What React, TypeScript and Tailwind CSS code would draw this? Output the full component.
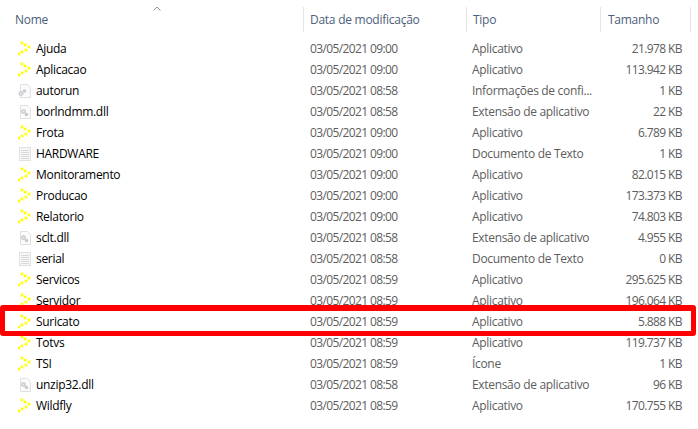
const rows: [string, string, string, string, string][] = [
  ['exe', 'Ajuda', '03/05/2021 09:00', 'Aplicativo', '21.978 KB'],
  ['exe', 'Aplicacao', '03/05/2021 09:00', 'Aplicativo', '113.942 KB'],
  ['ini', 'autorun', '03/05/2021 08:58', 'Informações de confi...', '1 KB'],
  ['dll', 'borlndmm.dll', '03/05/2021 08:58', 'Extensão de aplicativo', '22 KB'],
  ['exe', 'Frota', '03/05/2021 09:00', 'Aplicativo', '6.789 KB'],
  ['txt', 'HARDWARE', '03/05/2021 09:00', 'Documento de Texto', '1 KB'],
  ['exe', 'Monitoramento', '03/05/2021 09:00', 'Aplicativo', '82.015 KB'],
  ['exe', 'Producao', '03/05/2021 09:00', 'Aplicativo', '173.373 KB'],
  ['exe', 'Relatorio', '03/05/2021 09:00', 'Aplicativo', '74.803 KB'],
  ['dll', 'sclt.dll', '03/05/2021 08:58', 'Extensão de aplicativo', '4.955 KB'],
  ['txt', 'serial', '03/05/2021 08:58', 'Documento de Texto', '0 KB'],
  ['exe', 'Servicos', '03/05/2021 08:59', 'Aplicativo', '295.625 KB'],
  ['exe', 'Servidor', '03/05/2021 08:59', 'Aplicativo', '196.064 KB'],
  ['exe', 'Suricato', '03/05/2021 08:59', 'Aplicativo', '5.888 KB'],
  ['exe', 'Totvs', '03/05/2021 08:59', 'Aplicativo', '119.737 KB'],
  ['exe', 'TSI', '03/05/2021 08:59', 'Ícone', '1 KB'],
  ['dll', 'unzip32.dll', '03/05/2021 08:58', 'Extensão de aplicativo', '96 KB'],
  ['exe', 'Wildfly', '03/05/2021 08:59', 'Aplicativo', '170.755 KB'],
];

const dots = [
  [3, 1],
  [6, 3],
  [10, 5],
  [7, 8],
  [3, 10],
  [0, 12],
];

function FileIcon({ type }: { type: string }) {
  if (type === 'exe') {
    return (
      <svg width="16" height="16" viewBox="0 0 16 16" shapeRendering="crispEdges">
        {dots.map(([x, y]) => (
          <g key={`${x}-${y}`}>
            <rect x={x - 1} y={y - 1} width="4" height="4" fill="#ffffb8" />
            <rect x={x} y={y} width="2" height="2" fill="#ffff00" />
          </g>
        ))}
      </svg>
    );
  }
  if (type === 'txt') {
    return (
      <svg width="16" height="16" viewBox="0 0 16 16" shapeRendering="crispEdges">
        <rect x="1.5" y="1.5" width="11" height="13" fill="#f7f7f7" stroke="#e0e0e0" />
        <g fill="#d8d8d8">
          <rect x="3" y="4" width="8" height="1" />
          <rect x="3" y="6" width="8" height="1" />
          <rect x="3" y="8" width="8" height="1" />
          <rect x="3" y="10" width="8" height="1" />
          <rect x="3" y="12" width="8" height="1" />
        </g>
      </svg>
    );
  }
  const ini = type === 'ini';
  return (
    <svg width="16" height="16" viewBox="0 0 16 16">
      <path d="M2.5 1.5h7l3 3v10h-10z" fill="#fbfbfb" stroke="#e0e0e0" />
      <circle cx={ini ? 3 : 5.5} cy={ini ? 10.5 : 7.5} r="2.5" fill="#ced2d6" />
      <circle cx={ini ? 3 : 5.5} cy={ini ? 10.5 : 7.5} r="0.8" fill="#f0f0f0" />
      <circle cx={ini ? 6.5 : 8.5} cy={ini ? 8 : 10.5} r="1.8" fill="#c8ccd0" />
    </svg>
  );
}

export default function App() {
  return (
    <div className="relative h-[429px] w-[698px] overflow-hidden bg-white font-['Open_Sans',sans-serif] text-xs">
      <div className="absolute left-[153px] top-[6px] text-[#8f949a]">
        <svg width="8" height="5" viewBox="0 0 8 5" fill="none" stroke="currentColor" className="block">
          <path d="M.5 4.5l3.5-3.5 3.5 3.5" />
        </svg>
      </div>
      <div className="flex h-[38px] pt-[7px] tracking-[-0.26px] text-[#4c607a]">
        <div className="h-[25px] w-[304px] border-r border-[#e5e5e5] pl-[15px] leading-[25px]">Nome</div>
        <div className="h-[25px] w-[163px] border-r border-[#e5e5e5] pl-[6px] leading-[25px]">Data de modificação</div>
        <div className="h-[25px] w-[134px] border-r border-[#e5e5e5] pl-[6px] leading-[25px]">Tipo</div>
        <div className="h-[25px] w-[90px] border-r border-[#e5e5e5] pl-[7px] leading-[25px]">Tamanho</div>
      </div>
      <div className="flex flex-col pl-[18px] text-[#5d5d5d]">
        {rows.map(([icon, name, date, kind, size]) => (
          <div key={name} className="flex h-[21px] items-center leading-[21px]">
            <div className="flex w-[18px] shrink-0 items-center">
              <FileIcon type={icon} />
            </div>
            <div className="w-[274px] shrink-0 tracking-[-0.3px] text-[#000]">{name}</div>
            <div className="w-[162px] shrink-0 tracking-[-0.62px]">{date}</div>
            <div className="w-[116px] shrink-0 whitespace-nowrap tracking-[-0.32px]">{kind}</div>
            <div className="w-[94px] shrink-0 whitespace-nowrap text-right tracking-[-0.6px]">{size}</div>
          </div>
        ))}
      </div>
      <div className="absolute left-0 top-[305px] h-[31px] w-[696px] rounded-[3px] border-x-[5px] border-t-[6px] border-b-[5px] border-[#ff0000]" />
    </div>
  );
}
